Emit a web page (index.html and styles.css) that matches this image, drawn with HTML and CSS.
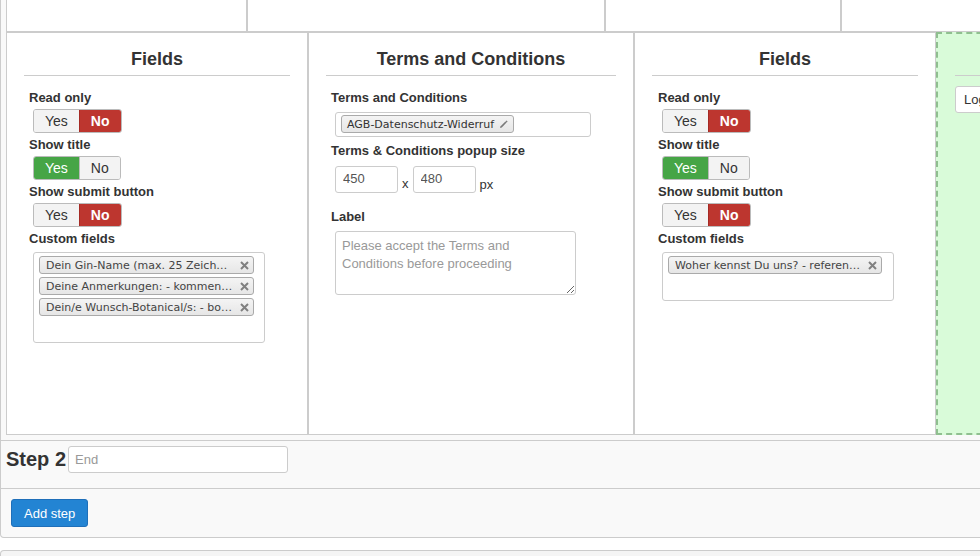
FILE: index.html
```html
<!DOCTYPE html>
<html lang="de">
<head>
    <meta charset="UTF-8">
    <title>Steps</title>
    <link rel="stylesheet" href="styles.css">
</head>
<body>
    <div class="panel">
        <div class="step-body">
            <div class="row top-row">
                <div class="cell c-a"></div>
                <div class="cell c-b"></div>
                <div class="cell c-c"></div>
                <div class="cell c-d"></div>
            </div>

            <div class="row main-row">
                <!-- Fields -->
                <div class="cell col-1">
                    <h3>Fields</h3>
                    <div class="form">
                        <label>Read only</label>
                        <div class="toggle"><span>Yes</span><span class="on-no">No</span></div>
                        <label>Show title</label>
                        <div class="toggle"><span class="on-yes">Yes</span><span>No</span></div>
                        <label>Show submit button</label>
                        <div class="toggle"><span>Yes</span><span class="on-no">No</span></div>
                        <label>Custom fields</label>
                        <div class="chosen multi">
                            <div class="chip"><span class="chip-text">Dein Gin-Name (max. 25 Zeichen) - gin_name</span><svg class="chip-x" width="9" height="9" viewBox="0 0 9 9"><path d="M1 1L8 8M8 1L1 8" stroke="#808080" stroke-width="2"/></svg></div>
                            <div class="chip"><span class="chip-text">Deine Anmerkungen: - kommentar</span><svg class="chip-x" width="9" height="9" viewBox="0 0 9 9"><path d="M1 1L8 8M8 1L1 8" stroke="#808080" stroke-width="2"/></svg></div>
                            <div class="chip"><span class="chip-text">Dein/e Wunsch-Botanical/s: - botanicals</span><svg class="chip-x" width="9" height="9" viewBox="0 0 9 9"><path d="M1 1L8 8M8 1L1 8" stroke="#808080" stroke-width="2"/></svg></div>
                            <div class="search-line"></div>
                        </div>
                    </div>
                </div>

                <!-- Terms -->
                <div class="cell col-2">
                    <h3>Terms and Conditions</h3>
                    <div class="form">
                        <label>Terms and Conditions</label>
                        <div class="chosen single">
                            <div class="chip chip-auto"><span>AGB-Datenschutz-Widerruf</span><svg class="pencil" width="9" height="9" viewBox="0 0 9 9"><path d="M1 8L1.6 6.2L6.4 1.4L7.6 2.6L2.8 7.4Z" fill="#7a7a7a"/><path d="M7 0.8L8.2 2" stroke="#7a7a7a" stroke-width="1.2"/></svg></div>
                        </div>
                        <label>Terms &amp; Conditions popup size</label>
                        <div class="size-row">
                            <input class="num" type="text" value="450">
                            <span class="x">x</span>
                            <input class="num" type="text" value="480">
                            <span class="px">px</span>
                        </div>
                        <label class="spaced">Label</label>
                        <textarea placeholder="Please accept the Terms and Conditions before proceeding"></textarea>
                    </div>
                </div>

                <!-- Fields -->
                <div class="cell col-3">
                    <h3>Fields</h3>
                    <div class="form">
                        <label>Read only</label>
                        <div class="toggle"><span>Yes</span><span class="on-no">No</span></div>
                        <label>Show title</label>
                        <div class="toggle"><span class="on-yes">Yes</span><span>No</span></div>
                        <label>Show submit button</label>
                        <div class="toggle"><span>Yes</span><span class="on-no">No</span></div>
                        <label>Custom fields</label>
                        <div class="chosen multi">
                            <div class="chip narrow"><span class="chip-text">Woher kennst Du uns? - referenzen</span><svg class="chip-x" width="9" height="9" viewBox="0 0 9 9"><path d="M1 1L8 8M8 1L1 8" stroke="#808080" stroke-width="2"/></svg></div>
                            <div class="search-line"></div>
                        </div>
                    </div>
                </div>

                <!-- drop zone -->
                <div class="cell col-4">
                    <h3>&nbsp;</h3>
                    <input class="title-input" type="text" value="Login">
                </div>
            </div>
        </div>

        <div class="step-head">
            <h2>Step 2</h2>
            <input class="step-name" type="text" placeholder="End">
        </div>

        <div class="panel-foot">
            <button class="btn-primary">Add step</button>
        </div>
    </div>

    <div class="panel next"></div>
</body>
</html>
```

FILE: styles.css
```css
body { margin: 0; overflow: hidden; background: #fff; color: #333; font-family: "Liberation Sans", Arial, sans-serif; font-size: 13px; }

.panel { width: 1300px; border: 1px solid #ccc; border-top: none; border-radius: 0 0 4px 4px; background: #f9f9f9; }
.panel.next { margin-top: 12px; height: 20px; border-top: 1px solid #ccc; border-bottom: none; border-radius: 4px 0 0 0; background: #f5f5f5; }

.step-body { padding: 0 0 5px 5px; }
.row { display: flex; }
.cell { box-sizing: border-box; border: 1px solid #ccc; background: #fff; flex: none; }

.top-row .cell { height: 32px; border-top: none; }
.c-a { width: 241px; }
.c-b { width: 358px; }
.c-c { width: 236px; }
.c-d { width: 400px; }

.main-row .cell { height: 403px; padding: 0 17px; }
.col-1 { width: 302px; }
.col-2 { width: 326px; }
.col-3 { width: 302px; }
.col-4 { width: 400px; border: 2px dashed #8fbf8f; background: #d9fbd9; padding-left: 16px; }

h3 { margin: 16px 0 0; padding-bottom: 6px; border-bottom: 1px solid #ccc; font-size: 18px; line-height: 20px; text-align: center; color: #333; }
.col-4 h3 { margin-top: 15px; }

.form { padding: 14px 0 0 5px; }
.col-3 .form { padding-left: 6px; }
label { display: block; font-weight: bold; line-height: 16px; margin-bottom: 3px; }
label.spaced { margin-top: 16px; }

.toggle { display: inline-flex; margin: 0 0 4px 4px; border: 1px solid #bbb; border-radius: 3px; overflow: hidden; }
.toggle span { box-sizing: border-box; height: 22px; line-height: 22px; padding: 0 11px; background: #f3f3f3; color: #333; font-size: 14px; }
.toggle span + span { border-left: 1px solid #bbb; }
.toggle .on-no { background: #bd362f; color: #fff; font-weight: bold; border-color: #a52a24; }
.toggle .on-yes { background: #46a546; color: #fff; border-color: #3b8d3b; }

.chosen { box-sizing: border-box; margin: 5px 0 0 4px; border: 1px solid #ccc; border-radius: 3px; background: #fff; }
.chosen.multi { width: 232px; padding: 3px 0 0 5px; }
.chosen.single { width: 256px; height: 25px; padding: 2px 5px; margin: 6px 0 6px 4px; }
.search-line { height: 23px; }

.chip { box-sizing: border-box; display: flex; align-items: center; width: 215px; height: 18px; margin-bottom: 3px; padding: 0 4px 0 6px; border: 1px solid #aaa; border-radius: 3px; background: linear-gradient(#f4f4f4, #e6e6e6); color: #444; font-family: "DejaVu Sans", Verdana, sans-serif; font-size: 11px; }
.chip.narrow { width: 214px; }
.chip-text { flex: 1; overflow: hidden; white-space: nowrap; text-overflow: ellipsis; }
.chip-x { flex: none; margin-left: 6px; }
.chip-auto { display: inline-flex; width: auto; padding: 0 5px 0 5px; color: #333; }
.pencil { margin-left: 5px; }

.size-row { display: flex; align-items: flex-end; margin: 7px 0 0 4px; }
.size-row .x { margin: 0 4px; line-height: 16px; padding-bottom: 1px; }
.size-row .px { margin-left: 4px; line-height: 16px; }

input, textarea { box-sizing: border-box; border: 1px solid #ccc; border-radius: 3px; background: #fff; font-family: "Liberation Sans", Arial, sans-serif; font-size: 13px; color: #555; outline: none; }
input::placeholder, textarea::placeholder { color: #999; }
.num { width: 63px; height: 27px; padding: 0 7px 2px; }

textarea { display: block; width: 241px; height: 64px; margin: 6px 0 0 4px; padding: 5px 6px; line-height: 18px; resize: both; }

.title-input { display: block; width: 200px; height: 27px; margin-top: 10px; padding: 0 8px; color: #333; }

.step-head { display: flex; align-items: center; padding: 5px 5px 15px; border-top: 1px solid #ccc; }
.step-head h2 { margin: 0 2px 0 0; font-size: 20px; line-height: 27px; color: #333; }
.step-name { width: 220px; height: 27px; padding: 0 6px; }

.panel-foot { padding: 10px; border-top: 1px solid #ccc; }
.btn-primary { height: 28px; padding: 0 12px; border: 1px solid #1f6fb9; border-radius: 3px; background: #2384d3; color: #fff; font-family: "Liberation Sans", Arial, sans-serif; font-size: 13px; }
```
